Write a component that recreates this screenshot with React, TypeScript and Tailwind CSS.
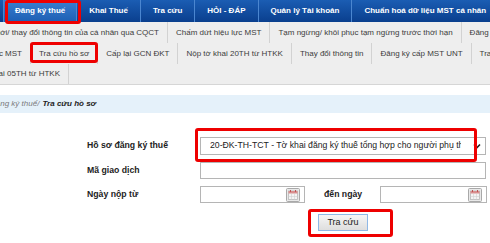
import React from "react";

function Calendar() {
  return (
    <svg width="14" height="14" viewBox="0 0 14 14" className="shrink-0">
      <rect x="0.5" y="0.5" width="13" height="13" rx="1" fill="#e9e9e9" stroke="#a9a9a9" />
      <rect x="2.5" y="3" width="9" height="8.5" fill="#f4f4f4" stroke="#b8b8b8" strokeWidth="0.8" />
      <rect x="2.5" y="3" width="9" height="2.5" fill="#d98e8e" />
      <rect x="4" y="2" width="1" height="2" fill="#b55" />
      <rect x="9" y="2" width="1" height="2" fill="#b55" />
      <line x1="5.5" y1="5.5" x2="5.5" y2="11.5" stroke="#d0d0d0" strokeWidth="0.6" />
      <line x1="8.5" y1="5.5" x2="8.5" y2="11.5" stroke="#d0d0d0" strokeWidth="0.6" />
      <line x1="2.5" y1="8.5" x2="11.5" y2="8.5" stroke="#d0d0d0" strokeWidth="0.6" />
    </svg>
  );
}

function MenuItem({ children, first }: { children: React.ReactNode; first?: boolean }) {
  return (
    <div
      className={
        "flex items-center whitespace-nowrap px-2 " +
        (first ? "" : "border-l border-[#d2d2d2]")
      }
    >
      {children}
    </div>
  );
}

export default function App() {
  return (
    <div className="relative w-[490px] h-[243px] overflow-hidden bg-white font-['Liberation_Sans',Arial,sans-serif]">
      {/* Top nav */}
      <div className="flex h-[22px] items-stretch bg-gradient-to-b from-[#1b5db3] to-[#0a3f8e] text-[8px] font-bold text-white whitespace-nowrap">
        <div className="w-[4px] shrink-0 border-r border-[#4b86d0]" />
        <div className="flex items-center px-[11px] bg-gradient-to-b from-[#3a80d2] to-[#1d5fb3] border-r border-[#4b86d0]">
          Đăng ký thuế
        </div>
        <div className="flex items-center px-3 border-r border-[#4b86d0]">Khai Thuế</div>
        <div className="flex items-center px-3 border-r border-[#4b86d0]">Tra cứu</div>
        <div className="flex items-center px-3 border-r border-[#4b86d0]">HỎI - ĐÁP</div>
        <div className="flex items-center px-3 border-r border-[#4b86d0]">Quản lý Tài khoản</div>
        <div className="flex items-center px-3">Chuẩn hoá dữ liệu MST cá nhân</div>
      </div>

      {/* Sub menu */}
      <div className="bg-[#eeeeee] text-[8px] text-[#3c3c3c] border-b border-[#d6d6d6]">
        <div className="flex h-[21px] items-stretch overflow-hidden">
          <div className="flex w-[167px] shrink-0 items-center justify-end overflow-hidden whitespace-nowrap pr-2">
            Đăng ký mới/ thay đổi thông tin của cá nhân qua CQCT
          </div>
          <MenuItem>Chấm dứt hiệu lực MST</MenuItem>
          <MenuItem>Tạm ngừng/ khôi phục tạm ngừng trước thời hạn</MenuItem>
          <MenuItem>Đăng ký cấp MST</MenuItem>
        </div>
        <div className="flex h-[21px] items-stretch overflow-hidden">
          <div className="flex w-[30px] shrink-0 items-center justify-end overflow-hidden whitespace-nowrap pr-2">
            Khôi phục hiệu lực MST
          </div>
          <MenuItem>Tra cứu hồ sơ</MenuItem>
          <MenuItem>Cấp lại GCN ĐKT</MenuItem>
          <MenuItem>Nộp tờ khai 20TH từ HTKK</MenuItem>
          <MenuItem>Thay đổi thông tin</MenuItem>
          <MenuItem>Đăng ký cấp MST UNT</MenuItem>
          <MenuItem>Tra cứu hồ sơ UNT</MenuItem>
        </div>
        <div className="flex h-[20px] items-stretch overflow-hidden">
          <div className="flex w-[69px] shrink-0 items-center justify-end overflow-hidden whitespace-nowrap pr-2 border-r border-[#d2d2d2]">
            Nộp tờ khai 05TH từ HTKK
          </div>
        </div>
      </div>

      {/* Breadcrumb */}
      <div className="mt-[10px] flex h-[18px] items-center overflow-hidden bg-[#e5f1fa] text-[8px] italic whitespace-nowrap">
        <span className="ml-[-10px] text-[#7a7a7a]">Đăng ký thuế/ </span>
        <span className="ml-[3px] font-bold text-[#222]">Tra cứu hồ sơ</span>
      </div>

      {/* Form */}
      <div className="mt-[24px] pl-[87px] text-[8.7px] text-[#222]">
        <div className="flex h-[18px] items-center">
          <div className="w-[113px] shrink-0 font-bold">Hồ sơ đăng ký thuế</div>
          <div className="flex h-[18px] w-[286px] items-center border border-[#b5b5b5] bg-white pl-[9px] pr-[4px]">
            <div className="flex-1 overflow-hidden whitespace-nowrap">
              20-ĐK-TH-TCT - Tờ khai đăng ký thuế tổng hợp cho người phụ thuộc
            </div>
            <svg width="8" height="6" viewBox="0 0 8 6" className="ml-[12px] shrink-0">
              <path d="M1 1.5 L4 4.5 L7 1.5" fill="none" stroke="#222" strokeWidth="1.6" />
            </svg>
          </div>
        </div>
        <div className="mt-[7px] flex h-[17px] items-center">
          <div className="w-[113px] shrink-0 font-bold">Mã giao dịch</div>
          <div className="h-[17px] w-[286px] border border-[#b5b5b5] bg-white" />
        </div>
        <div className="mt-[7px] flex h-[17px] items-center">
          <div className="w-[113px] shrink-0 font-bold">Ngày nộp từ</div>
          <div className="flex h-[17px] w-[105px] items-center justify-end border border-[#b5b5b5] bg-white pr-[4px]">
            <Calendar />
          </div>
          <div className="ml-[19px] w-[56px] shrink-0 font-bold">đến ngày</div>
          <div className="flex h-[17px] w-[107px] items-center justify-end border border-[#b5b5b5] bg-white pr-[4px]">
            <Calendar />
          </div>
        </div>
        <div className="mt-[11px] flex pl-[231px]">
          <button className="flex h-[17px] w-[50px] items-center justify-center border border-[#8fb8e6] bg-gradient-to-b from-[#f6f6f6] to-[#dedede] text-[9px] text-[#222]">
            Tra cứu
          </button>
        </div>
      </div>

      {/* Red highlight boxes */}
      <div className="pointer-events-none absolute left-[5px] top-[0px] h-[24px] w-[76px] rounded-[3px] border-[3px] border-[#ee0000]" />
      <div className="pointer-events-none absolute left-[30px] top-[42px] h-[21px] w-[68px] rounded-[3px] border-[3px] border-[#ee0000]" />
      <div className="pointer-events-none absolute left-[195px] top-[128px] h-[34px] w-[282px] rounded-[3px] border-[3px] border-[#ee0000]" />
      <div className="pointer-events-none absolute left-[308px] top-[209px] h-[28px] w-[85px] rounded-[3px] border-[3px] border-[#ee0000]" />
    </div>
  );
}
